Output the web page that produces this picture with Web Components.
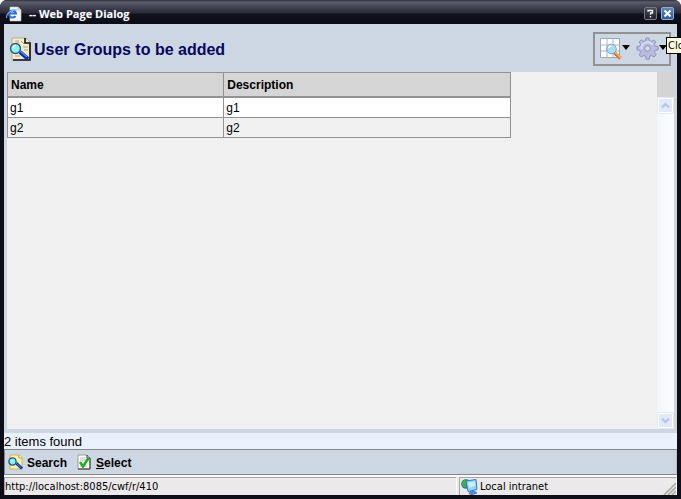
<!DOCTYPE html>
<html lang="en">
<head>
<meta charset="utf-8">
<title>Web Page Dialog</title>
<style>
html, body { margin: 0; height: 100%; overflow: hidden; background: #f4f4fa; }
body { font: 12px "Liberation Sans", Arial, sans-serif; color: #000; }
</style>
</head>
<body>
<dialog-window>
  <title-bar slot="title">-- Web Page Dialog</title-bar>
  <page-header slot="header">User Groups to be added</page-header>
  <group-grid></group-grid>
  <result-count slot="footer">2 items found</result-count>
  <action-bar slot="footer"></action-bar>
  <status-bar slot="footer">http://localhost:8085/cwf/r/410<span slot="zone">Local intranet</span></status-bar>
</dialog-window>
<script>
const define = (name, html) => {
  const t = document.createElement('template');
  t.innerHTML = '<style>*{box-sizing:border-box}button{font:inherit;color:inherit;margin:0;padding:0;border:0;background:none}svg{display:block;flex:none}</style>' + html;
  customElements.define(name, class extends HTMLElement {
    constructor() {
      super();
      this.attachShadow({ mode: 'open' }).append(t.content.cloneNode(true));
    }
  });
};

const searchDoc = size => `
<svg width="${size}" height="${size}" viewBox="0 0 24 24" aria-hidden="true">
  <path d="M3 1h14l4 4v18H3z" fill="#f3ecd2" stroke="#b9ae8c"/>
  <path d="M16 1v5h5v17H4" fill="none" stroke="#111" stroke-width="1.600"/>
  <path d="M6 4h4M12 4l3 3M7 6h3M14 10h5M15 13h4M6 19h5" stroke="#b9a36c" fill="none"/>
  <path d="M11 15l8 7" stroke="#0a2fae" stroke-width="4"/>
  <path d="M11 14l7 6" stroke="#5d8cf5" stroke-width="1.200"/>
  <circle cx="6.500" cy="11.500" r="5" fill="#8ff0f0" stroke="#2a5a7c" stroke-width="1.400"/>
  <path d="M4 11a3 3 0 0 1 3-2.500" stroke="#fff" fill="none" stroke-width="1.400"/>
</svg>`;

define('dialog-window', `
<style>
:host { display: flex; flex-direction: column; height: 100vh; box-sizing: border-box; background: #0e0e18; border-radius: 7px 7px 0 0; overflow: hidden; }
.page { flex: 1; min-height: 0; margin: 0 4px 4px; display: flex; flex-direction: column; background: #cdd7e3; }
.body { flex: 1; min-height: 0; display: flex; padding: 0 3px 4px; }
</style>
<slot name="title"></slot>
<div class="page"><slot name="header"></slot><div class="body"><slot></slot></div><slot name="footer"></slot></div>`);

define('title-bar', `
<style>
:host { display: flex; align-items: center; flex: none; height: 24px; box-sizing: border-box; padding: 3px 7px 0 6px; color: #fff; font: bold 11px/16px "Open Sans", "Noto Sans", sans-serif; background: linear-gradient(#30303c 0, #5c5d6c 2px, #474857 6px, #292a38 13px, #12121d 14px, #0b0b15 100%); }
.text { flex: 1; margin-left: 7px; text-shadow: 0 0 2px #3c4270; }
button { width: 13px; height: 13px; border: 1px solid #777986; border-radius: 2px; background: linear-gradient(#4b4b57, #20202b); display: grid; place-items: center; font-size: 10px; line-height: 10px; margin-left: 4px; }
.close { background: linear-gradient(#5f88bd, #2b5a9b); border-color: #8daedb; }
</style>
<svg width="16" height="16" viewBox="0 0 16 16" aria-hidden="true">
  <path d="M4 1h8l3 3v11H4z" fill="#f6f5f0" stroke="#c9c7c0" stroke-width=".6"/>
  <path d="M12 1v3h3" fill="#d8d7d2" stroke="#aaa" stroke-width=".5"/>
  <path d="M9.500 10a3.500 3.500 0 1 1 .5-2.500H4" fill="none" stroke="#2b6fd6" stroke-width="2"/>
  <path d="M1 12C-1 8 6 3 11 4" fill="none" stroke="#79b5f5" stroke-width="1.100"/>
</svg>
<span class="text"><slot></slot></span>
<button type="button" aria-label="Help"><svg width="9" height="9" viewBox="0 0 9 9"><path d="M2 2.800V1.500h4.500V4H4.500v1.800M4.500 7v1.500" fill="none" stroke="#fff" stroke-width="1.300"/></svg></button>
<button type="button" class="close" aria-label="Close"><svg width="9" height="9" viewBox="0 0 9 9"><path d="M1.500 1.500l6 6M7.500 1.500l-6 6" stroke="#fff" stroke-width="2"/></svg></button>`);

define('page-header', `
<style>
:host { position: relative; flex: none; display: flex; align-items: center; height: 48px; box-sizing: border-box; padding: 2px 6px 0 5px; }
h1 { flex: 1; margin: 0 0 0 1px; padding-top: 2px; font-size: 16px; line-height: 20px; color: #07075f; }
.tools { display: flex; align-items: center; height: 34px; border: 2px solid #929292; padding: 0 2px 0 5px; gap: 6px; }
.tools button { display: flex; align-items: center; }
</style>
${searchDoc(24)}
<h1><slot></slot></h1>
<div class="tools">
  <button type="button" aria-label="Table view">
    <svg width="30" height="24" viewBox="0 0 30 24">
      <path d="M.5 1.500h19v19H.5z" fill="#fff" stroke="#96a6bf"/>
      <path d="M7 1.500v19M13 1.500v19M.5 8h19M.5 14h19" stroke="#a7b5ca"/>
      <path d="M14.500 15.500l6 6" stroke="#d0762f" stroke-width="3.800"/>
      <path d="M15 15l6 6" stroke="#ffb573" stroke-width="1.600"/>
      <circle cx="11.500" cy="12" r="4.800" fill="#a8def8" stroke="#7d9fc9"/>
      <path d="M8.500 11a3 3 0 0 1 3-2" stroke="#fff" stroke-width="1.500" fill="none"/>
      <path d="M22 8h8l-4 5z" fill="#000"/>
    </svg>
  </button>
  <button type="button" aria-label="Settings">
    <svg width="31" height="24" viewBox="0 0 31 24">
      <g fill="#b9bce0" stroke="#8587b5" stroke-width=".8">
        <path d="M10 1h3l.6 2.700 1.800.7L17.800 3l2 2-1.500 2.300.8 1.700 3 .7v3.200l-2.900.6-.6 1.800 1.600 2.400-2.200 2.300-2.500-1.600-1.700.8-.7 3h-3l-.6-3-1.800-.7L5.300 20 3 17.800l1.600-2.400-.8-1.900-2.800-.6V9.700L3.900 9l.7-1.700L3.100 5l2.200-2.100 2.400 1.500 1.700-.7z"/>
      </g>
      <path d="M5.500 12a6 6 0 0 1 11-4" fill="none" stroke="#d9daf0" stroke-width="2"/>
      <circle cx="11.500" cy="11.500" r="2.800" fill="#d5dceb" stroke="#8f91bb"/>
      <path d="M23 8h8l-4 5z" fill="#000"/>
    </svg>
  </button>
</div>
<hover-tip>Clo</hover-tip>`);

define('hover-tip', `
<style>
:host { position: absolute; left: calc(100% - 11px); top: 13px; height: 17px; box-sizing: border-box; padding: 0 1px; border: 1px solid #000; border-right: 0; background: #ffffe1; font: 11px/15px "DejaVu Sans Condensed", Tahoma, sans-serif; white-space: nowrap; }
</style><slot></slot>`);

define('group-grid', `
<style>
:host { flex: 1; min-width: 0; display: flex; background: #f0f0f0; }
.main { flex: 1; min-width: 0; }
table { border-collapse: collapse; width: 504px; max-width: 100%; table-layout: fixed; font-size: 12px; line-height: 14px; }
th, td { border: 1px solid #929292; text-align: left; padding: 3px 2px 2px; }
th { background: #d5d5d5; border-bottom-width: 2px; padding: 5px 3px 4px; }
th:first-child { width: 43%; }
tbody tr:first-child { background: #fff; }
.side { width: 17px; display: flex; flex-direction: column; }
.corner { height: 25px; background: #d4d4d4; }
.track { flex: 1; display: flex; flex-direction: column; justify-content: space-between; background: linear-gradient(90deg, #f3f6fd, #fcfdff); }
.track button { height: 17px; border: 1px solid #e2eaf8; border-radius: 2px; background: #e1eafa; box-shadow: inset 0 0 0 1px #fff; display: grid; place-items: center; }
</style>
<div class="main">
<table><thead><tr><th scope="col">Name</th><th scope="col">Description</th></tr></thead>
<tbody><tr><td>g1</td><td>g1</td></tr><tr><td>g2</td><td>g2</td></tr></tbody></table>
</div>
<div class="side"><div class="corner"></div><div class="track">
<button type="button" aria-label="Scroll up"><svg width="9" height="7" viewBox="0 0 9 7"><path d="M1 5.500L4.500 2 8 5.500" fill="none" stroke="#b3c4e2" stroke-width="2"/></svg></button>
<button type="button" aria-label="Scroll down"><svg width="9" height="7" viewBox="0 0 9 7"><path d="M1 1.500L4.500 5 8 1.500" fill="none" stroke="#b3c4e2" stroke-width="2"/></svg></button>
</div></div>`);

define('result-count', `
<style>:host { flex: none; display: block; height: 16px; font-size: 13px; line-height: 18px; background: #e9f1fd; }</style><slot></slot>`);

define('action-bar', `
<style>
:host { flex: none; display: flex; align-items: center; gap: 10px; height: 26px; box-sizing: border-box; padding: 0 3px; border: 1px solid #85868c; border-right-color: #b5bac4; background: #cdd7e3; font-weight: bold; font-size: 12px; line-height: 16px; }
button { display: flex; align-items: center; gap: 4px; }
span { padding-top: 1px; }
</style>
<button type="button">
<svg width="15" height="16" viewBox="0 0 15 16" aria-hidden="true">
  <path d="M2 1h9l3 3v11H2z" fill="#fbf3a4" stroke="#cdb75a"/>
  <path d="M11 1v3h3" fill="#fff" stroke="#b89c3c"/>
  <path d="M8 9l6 5.500" stroke="#0b2fa8" stroke-width="3"/>
  <path d="M8 9l5 4.500" stroke="#4f86f0"/>
  <circle cx="4.500" cy="7.500" r="3.600" fill="#8ff0f0" stroke="#1b4d88" stroke-width="1.300"/>
</svg><span>Search</span></button>
<button type="button">
<svg width="15" height="16" viewBox="0 0 15 16" aria-hidden="true">
  <path d="M1 1h9l3 3v11H1z" fill="#fff" stroke="#9a9a9a"/>
  <path d="M10 1v3h3v11H1" fill="none" stroke="#333"/>
  <path d="M3 4h5M3 6h7M3 12h7" stroke="#b7bfb7"/>
  <path d="M3 8l3 4.500L11.500 4" fill="none" stroke="#18b51c" stroke-width="2.600"/>
</svg><span><u>S</u>elect</span></button>`);

define('status-bar', `
<style>
:host { flex: none; display: flex; height: 20px; box-sizing: border-box; border-top: 2px solid #fafafa; background: #ece9ea; font: 11px/16px "DejaVu Sans Condensed", Tahoma, sans-serif; }
.cell { border-top: 1px solid #aaa5a5; border-left: 1px solid #aaa5a5; border-right: 1px solid #fff; display: flex; align-items: center; min-width: 0; white-space: nowrap; }
.url { flex: 1; }
.zone { width: 218px; margin-left: 2px; gap: 2px; padding-left: 1px; }
.zone svg:last-child { margin-left: auto; align-self: end; }
</style>
<div class="cell url"><slot></slot></div>
<div class="cell zone">
<svg width="17" height="16" viewBox="0 0 17 16" aria-hidden="true">
  <circle cx="5" cy="5" r="4.800" fill="#2279c8"/>
  <path d="M1 3q3-4 6-2L6 5 4 9Q0 8 1 3z" fill="#43ae43"/>
  <path d="M5 2l10-1.500 1 10-9 2z" fill="#8ed5fa" stroke="#3a76c3"/>
  <path d="M7 3.500l7-1 .300 4L8 9z" fill="#c9efff"/>
  <path d="M9 13l4-1 3 2-5 1.800-3-1z" fill="#4d8de0" stroke="#285ba9" stroke-width=".6"/>
</svg><slot name="zone"></slot>
<svg width="13" height="13" viewBox="0 0 13 13" aria-hidden="true"><path d="M1 13L13 1M5 13l8-8M9 13l4-4" stroke="#aaa7a0" stroke-width="1.600"/></svg>
</div>`);
</script>
</body>
</html>
